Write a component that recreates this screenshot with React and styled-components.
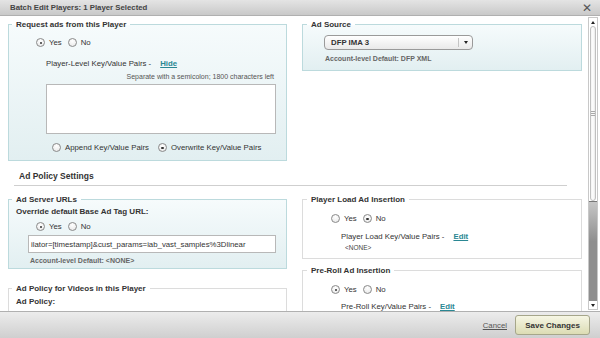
import React from "react";
import styled, { createGlobalStyle } from "styled-components";

const GlobalStyle = createGlobalStyle`
	html, body {
		margin: 0;
		padding: 0;
		background: #fff;
	}
	body {
		font-family: "Liberation Sans", Arial, sans-serif;
		color: #333;
	}
`;

const Dialog = styled.div`
	width: 600px;
	height: 338px;
	display: flex;
	flex-direction: column;
	overflow: hidden;
	background: #fff;
`;

const TitleBar = styled.div`
	height: 16px;
	flex: none;
	display: flex;
	align-items: center;
	justify-content: space-between;
	padding: 0 8px 0 10px;
	background: linear-gradient(#e4e4e4, #c9c9c9);
	border-bottom: 1px solid #b0b0b0;
	box-sizing: border-box;
	font-size: 7.8px;
	font-weight: bold;
	color: #444;
`;

const Close = styled.span`
	font-size: 12px;
	font-weight: normal;
	color: #555;
	line-height: 1;
`;

const Body = styled.div`
	flex: 1;
	display: flex;
	min-height: 0;
`;

const Content = styled.div`
	flex: 1;
	overflow: hidden;
	padding: 4px 6px 0 8px;
`;

const Columns = styled.div`
	display: grid;
	grid-template-columns: 279px 280px;
	column-gap: 15px;
	align-items: start;
	margin-top: ${(p) => p.top || 0}px;
`;

const Stack = styled.div`
	display: flex;
	flex-direction: column;
	gap: ${(p) => p.gap}px;
`;

const Box = styled.fieldset`
	margin: 0;
	min-width: 0;
	padding: 0;
	border: 1px solid ${(p) => (p.tinted ? "#bcdadd" : "#dcdcdc")};
	background: ${(p) => (p.tinted ? "linear-gradient(#f6fbfc, #e2eff1)" : "#fff")};
	height: ${(p) => (p.h ? `${p.h}px` : "auto")};
	box-sizing: border-box;
`;

const Legend = styled.legend`
	margin-left: ${(p) => p.offset || 3}px;
	padding: 0 4px;
	font-size: 8px;
	font-weight: bold;
	color: #333;
`;

const Row = styled.div`
	display: flex;
	align-items: center;
	padding-left: ${(p) => p.indent || 0}px;
	margin-top: ${(p) => p.top || 0}px;
	font-size: 7.8px;
	color: #333;
`;

const Option = styled.label`
	display: flex;
	align-items: center;
	margin-right: ${(p) => p.space || 6}px;
`;

const Dot = styled.span`
	width: 9px;
	height: 9px;
	border-radius: 50%;
	border: 1px solid #8a8a8a;
	background: radial-gradient(circle at 50% 30%, #fff, #e6e6e6);
	box-sizing: border-box;
	margin-right: 4px;
	position: relative;
	&::after {
		content: "";
		display: ${(p) => (p.on ? "block" : "none")};
		position: absolute;
		left: 2.5px;
		top: 2.5px;
		width: 2.5px;
		height: 2.5px;
		border-radius: 50%;
		background: #333;
	}
`;

const Link = styled.a`
	color: #2a8793;
	text-decoration: underline;
	font-weight: bold;
	margin-left: ${(p) => p.left || 10}px;
	cursor: pointer;
`;

const Hint = styled.div`
	font-size: 7px;
	color: #555;
	text-align: right;
	padding-right: 12px;
	margin-top: 5px;
`;

const TextArea = styled.div`
	margin: 4px 10px 0 37px;
	height: 50px;
	background: #fff;
	border: 1px solid #b8b8b8;
	box-sizing: border-box;
`;

const Select = styled.div`
	margin: 6px 0 0 21px;
	width: 149px;
	height: 15px;
	display: flex;
	align-items: center;
	border: 1px solid #9a9a9a;
	border-radius: 4px;
	background: linear-gradient(#ffffff, #e9e9e9);
	box-sizing: border-box;
	font-size: 7.8px;
	font-weight: bold;
	color: #333;
`;

const SelectText = styled.span`
	flex: 1;
	padding-left: 6px;
`;

const Arrow = styled.span`
	width: 13px;
	height: 9px;
	border-left: 1px solid #c4c4c4;
	display: flex;
	align-items: center;
	justify-content: center;
	&::after {
		content: "";
		border-left: 2.5px solid transparent;
		border-right: 2.5px solid transparent;
		border-top: 3px solid #222;
	}
`;

const Note = styled.div`
	font-size: 7px;
	font-weight: bold;
	color: #666;
	padding-left: ${(p) => p.indent || 0}px;
	margin-top: ${(p) => p.top || 0}px;
`;

const Heading = styled.div`
	margin: 10px 15px 0 6px;
	padding: 0 0 4px 5px;
	border-bottom: 1px solid #cfcfcf;
	font-size: 8.5px;
	font-weight: bold;
	color: #333;
`;

const Label = styled.div`
	font-size: 8px;
	font-weight: bold;
	color: #333;
	padding-left: 7px;
	margin-top: ${(p) => p.top || 0}px;
`;

const UrlInput = styled.div`
	margin: 4px 10px 0 19px;
	height: 18px;
	padding-left: 2px;
	display: flex;
	align-items: center;
	background: #fff;
	border: 1px solid #b8b8b8;
	box-sizing: border-box;
	font-size: 7.8px;
	color: #333;
	white-space: nowrap;
	overflow: hidden;
`;

const Small = styled.div`
	font-size: 6.5px;
	color: #444;
	padding-left: 42px;
	margin-top: 3px;
`;

const Scrollbar = styled.div`
	width: 10px;
	margin: 1px 2px 1px 0;
	display: flex;
	flex-direction: column;
	border: 1px solid #c8c8c8;
	box-sizing: border-box;
	background: #fff;
`;

const ScrollArrow = styled.div`
	height: 8px;
	flex: none;
	display: flex;
	align-items: center;
	justify-content: center;
	background: #fff;
	&::after {
		content: "";
		border-left: 2px solid transparent;
		border-right: 2px solid transparent;
		${(p) => (p.up ? "border-bottom: 3px solid #222;" : "border-top: 3px solid #222;")}
	}
`;

const Thumb = styled.div`
	flex: 175;
	margin: 0 1px;
	border: 1px solid #c0c0c0;
	border-radius: 4px;
	background: linear-gradient(90deg, #f3f3f3, #ffffff, #e8e8e8);
	display: flex;
	align-items: center;
	justify-content: center;
	&::after {
		content: "";
		width: 4px;
		height: 5px;
		background: repeating-linear-gradient(#aaa 0 1px, transparent 1px 2px);
	}
`;

const Track = styled.div`
	flex: 100;
	background: linear-gradient(#c6c6c6, #8e8e8e 40%, #8e8e8e);
	border-top: 1px solid #777;
`;

const Footer = styled.div`
	height: 27px;
	flex: none;
	display: flex;
	align-items: center;
	justify-content: flex-end;
	gap: 8px;
	padding-right: 10px;
	background: linear-gradient(#ececec, #cfcfcf);
	border-top: 1px solid #b0b0b0;
	box-sizing: border-box;
`;

const Cancel = styled.a`
	font-size: 7.8px;
	color: #555;
	text-decoration: underline;
	cursor: pointer;
`;

const SaveButton = styled.button`
	height: 20px;
	width: 75px;
	padding: 0;
	border: 1px solid #a6a68a;
	border-radius: 3px;
	background: linear-gradient(#f6f6e4, #dcdcb4);
	font-family: "Liberation Sans", Arial, sans-serif;
	font-size: 8px;
	font-weight: bold;
	color: #333;
`;

const Radio = ({ on, space, children }) => (
	<Option space={space}>
		<Dot on={on} />
		{children}
	</Option>
);

const App = () => {
	return (
		<Dialog>
			<GlobalStyle />
			<TitleBar>
				Batch Edit Players: 1 Player Selected
				<Close>✕</Close>
			</TitleBar>
			<Body>
				<Content>
					<Columns>
						<Box tinted h={141}>
							<Legend offset={3}>Request ads from this Player</Legend>
							<Row indent={27} top={9}>
								<Radio on>Yes</Radio>
								<Radio>No</Radio>
							</Row>
							<Row indent={37} top={12}>
								Player-Level Key/Value Pairs -
								<Link left={9}>Hide</Link>
							</Row>
							<Hint>Separate with a semicolon; 1800 characters left</Hint>
							<TextArea />
							<Row indent={43} top={9}>
								<Radio space={9}>Append Key/Value Pairs</Radio>
								<Radio on>Overwrite Key/Value Pairs</Radio>
							</Row>
						</Box>
						<Box tinted h={51}>
							<Legend offset={4}>Ad Source</Legend>
							<Select>
								<SelectText>DFP IMA 3</SelectText>
								<Arrow />
							</Select>
							<Note indent={22} top={5}>
								Account-level Default: DFP XML
							</Note>
						</Box>
					</Columns>

					<Heading>Ad Policy Settings</Heading>

					<Columns top={9}>
						<Stack gap={15}>
							<Box tinted h={74}>
								<Legend offset={3}>Ad Server URLs</Legend>
								<Label top={3}>Override default Base Ad Tag URL:</Label>
								<Row indent={27} top={6}>
									<Radio on>Yes</Radio>
									<Radio>No</Radio>
								</Row>
								<UrlInput>
									ilator=[timestamp]&amp;cust_params=iab_vast_samples%3Dlinear
								</UrlInput>
								<Note indent={21} top={4}>
									Account-level Default: &lt;NONE&gt;
								</Note>
							</Box>
							<Box h={60}>
								<Legend offset={3}>Ad Policy for Videos in this Player</Legend>
								<Label top={4}>Ad Policy:</Label>
							</Box>
						</Stack>
						<Stack gap={7}>
							<Box h={64}>
								<Legend offset={4}>Player Load Ad Insertion</Legend>
								<Row indent={28} top={10}>
									<Radio>Yes</Radio>
									<Radio on>No</Radio>
								</Row>
								<Row indent={38} top={9}>
									Player Load Key/Value Pairs -
									<Link left={9}>Edit</Link>
								</Row>
								<Small>&lt;NONE&gt;</Small>
							</Box>
							<Box h={60}>
								<Legend offset={4}>Pre-Roll Ad Insertion</Legend>
								<Row indent={28} top={10}>
									<Radio on>Yes</Radio>
									<Radio>No</Radio>
								</Row>
								<Row indent={38} top={8}>
									Pre-Roll Key/Value Pairs -
									<Link left={9}>Edit</Link>
								</Row>
							</Box>
						</Stack>
					</Columns>
				</Content>
				<Scrollbar>
					<ScrollArrow up />
					<Thumb />
					<Track />
					<ScrollArrow />
				</Scrollbar>
			</Body>
			<Footer>
				<Cancel>Cancel</Cancel>
				<SaveButton>Save Changes</SaveButton>
			</Footer>
		</Dialog>
	);
};

export default App;
